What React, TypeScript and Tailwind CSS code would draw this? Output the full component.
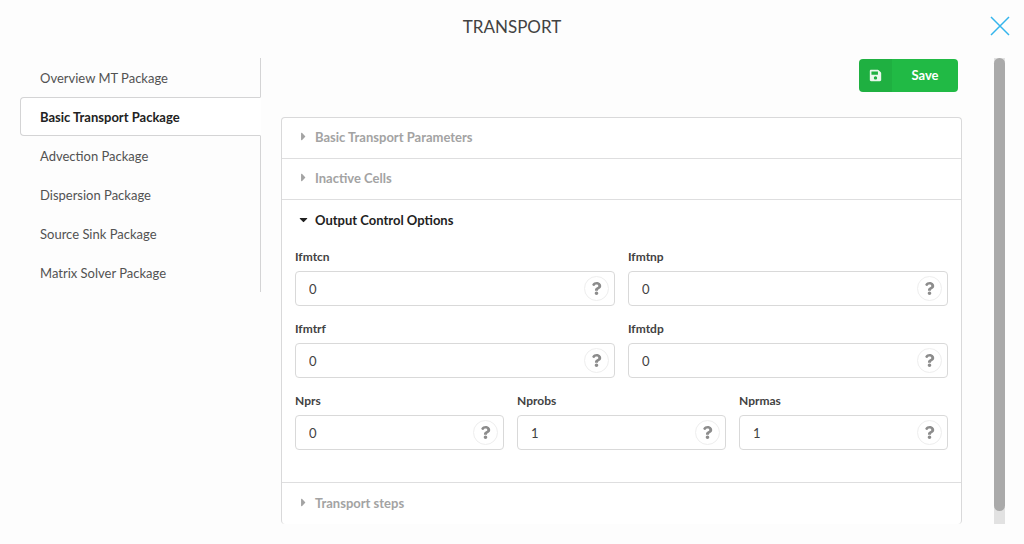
import { useState } from 'react'
import { FaCaretDown, FaCaretRight, FaQuestion, FaSave } from 'react-icons/fa'

const packages = [
  'Overview MT Package',
  'Basic Transport Package',
  'Advection Package',
  'Dispersion Package',
  'Source Sink Package',
  'Matrix Solver Package',
]

type Values = Record<string, string>

interface FieldProps {
  name: string
  label: string
  values: Values
  onChange: (name: string, value: string) => void
}

function Field({ name, label, values, onChange }: FieldProps) {
  return (
    <div>
      <label htmlFor={name} className="mb-1 block text-xs leading-5 font-bold text-[#424242]">
        {label}
      </label>
      <div className="relative">
        <input
          id={name}
          value={values[name]}
          onChange={e => onChange(name, e.target.value)}
          className="h-[35px] w-full rounded-[4px] border border-[#d9d9d9] bg-white pr-10 pl-[13px] text-[13px] text-[#424242] outline-none focus:border-[#85b7d9]"
        />
        <button
          type="button"
          aria-label={`Help for ${label}`}
          className="absolute top-[5px] right-[6px] flex h-[25px] w-[25px] items-center justify-center rounded-full border border-[#eeeeee] bg-white text-[#8c8c8c]"
        >
          <FaQuestion className="h-[13px] w-[13px]" />
        </button>
      </div>
    </div>
  )
}

interface SectionTitleProps {
  title: string
  active: boolean
  onClick: () => void
}

function SectionTitle({ title, active, onClick }: SectionTitleProps) {
  const Caret = active ? FaCaretDown : FaCaretRight
  return (
    <button
      type="button"
      onClick={onClick}
      aria-expanded={active}
      className={`flex h-[41px] w-full items-center pl-[15px] text-left text-[13px] font-bold ${active ? 'text-[#222222]' : 'text-[#a3a3a3]'}`}
    >
      <span className="flex w-[18px] pb-[3px]">
        <Caret className="h-[13px] w-[13px]" />
      </span>
      {title}
    </button>
  )
}

export default function App() {
  const [selected, setSelected] = useState('Basic Transport Package')
  const [open, setOpen] = useState('output')
  const [values, setValues] = useState<Values>({
    ifmtcn: '0',
    ifmtnp: '0',
    ifmtrf: '0',
    ifmtdp: '0',
    nprs: '0',
    nprobs: '1',
    nprmas: '1',
  })

  const handleChange = (name: string, value: string) => {
    setValues({ ...values, [name]: value })
  }

  const toggle = (key: string) => {
    setOpen(open === key ? '' : key)
  }

  const field = { values, onChange: handleChange }

  return (
    <div className="min-h-screen bg-[#fdfdfd] font-['Lato',sans-serif] text-[#424242]">
      <header className="relative flex h-[58px] items-center justify-center pb-1">
        <h1 className="text-[17px]">TRANSPORT</h1>
        <button type="button" aria-label="Close" className="absolute top-4 right-[14px]">
          <svg viewBox="0 0 20 20" className="h-5 w-5" fill="none" stroke="#35b5ec" strokeWidth="1.5">
            <path d="M1 1L19 19M19 1L1 19" />
          </svg>
        </button>
      </header>

      <div className="flex pr-[19px] pl-5">
        <nav className="flex w-[241px] shrink-0 flex-col self-start">
          {packages.map(name => (
            <button
              key={name}
              type="button"
              onClick={() => setSelected(name)}
              className={`h-[39px] border px-[19px] pt-[2px] text-left text-[13px] ${
                name === selected
                  ? 'rounded-l-[4px] border-[#d4d4d5] border-r-transparent bg-white font-bold text-[#222222]'
                  : 'border-y-0 border-l-transparent border-r-[#d4d4d5] text-[#525252]'
              }`}
            >
              {name}
            </button>
          ))}
        </nav>

        <main className="ml-5 min-w-0 flex-1">
          <div className="flex justify-end pt-px pr-1">
            <button type="button" className="flex h-[33px] overflow-hidden rounded-[4px] bg-[#21ba45] text-[13px] font-bold text-white">
              <span className="flex h-full w-[33px] items-center justify-center bg-black/5">
                <FaSave className="h-[13px] w-[13px] opacity-90" />
              </span>
              <span className="flex h-full w-[66px] items-center justify-center">Save</span>
            </button>
          </div>

          <div className="mt-[25px] divide-y divide-[#dededf] rounded-[4px] border border-b-0 border-[#d9d9da] bg-white">
            <SectionTitle title="Basic Transport Parameters" active={open === 'basic'} onClick={() => toggle('basic')} />
            <SectionTitle title="Inactive Cells" active={open === 'inactive'} onClick={() => toggle('inactive')} />
            <div>
              <SectionTitle title="Output Control Options" active={open === 'output'} onClick={() => toggle('output')} />
              {open === 'output' && (
                <form className="space-y-[13px] px-[13px] pt-[6px] pb-8" onSubmit={e => e.preventDefault()}>
                  <div className="grid grid-cols-2 gap-[13px]">
                    <Field name="ifmtcn" label="Ifmtcn" {...field} />
                    <Field name="ifmtnp" label="Ifmtnp" {...field} />
                  </div>
                  <div className="grid grid-cols-2 gap-[13px]">
                    <Field name="ifmtrf" label="Ifmtrf" {...field} />
                    <Field name="ifmtdp" label="Ifmtdp" {...field} />
                  </div>
                  <div className="grid grid-cols-3 gap-[13px]">
                    <Field name="nprs" label="Nprs" {...field} />
                    <Field name="nprobs" label="Nprobs" {...field} />
                    <Field name="nprmas" label="Nprmas" {...field} />
                  </div>
                </form>
              )}
            </div>
            <SectionTitle title="Transport steps" active={open === 'steps'} onClick={() => toggle('steps')} />
          </div>
        </main>

        <div className="ml-8 w-[11px] bg-[#e2e2e2] pb-[13px]">
          <div className="h-full rounded-full bg-[#aaaaaa]" />
        </div>
      </div>
    </div>
  )
}
